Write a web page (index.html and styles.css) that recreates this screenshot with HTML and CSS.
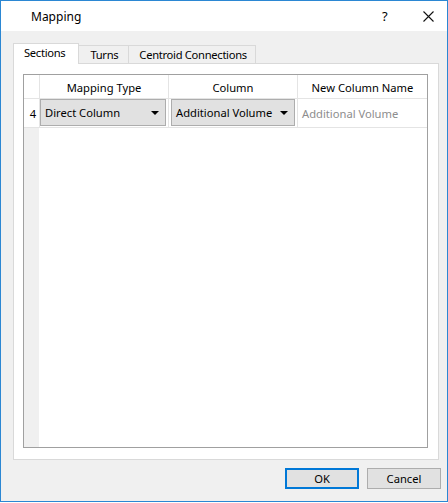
FILE: index.html
```html
<!DOCTYPE html>
<html lang="en">
<head>
    <meta charset="UTF-8">
    <title>Mapping</title>
    <link rel="stylesheet" href="styles.css">
</head>
<body>
    <div class="window">
        <div class="titlebar">
            <span class="title">Mapping</span>
            <span class="help">?</span>
            <span class="close">
                <svg width="11" height="11" viewBox="0 0 11 11"><path d="M0.5 0.5L10.5 10.5M10.5 0.5L0.5 10.5" stroke="#111" stroke-width="1.1"/></svg>
            </span>
        </div>

        <div class="content">
            <div class="tabs">
                <div class="tab active">Sections</div>
                <div class="tab">Turns</div>
                <div class="tab last">Centroid Connections</div>
            </div>
            <div class="panel">
                <div class="grid">
                    <div class="row head">
                        <div class="cell rowhead"></div>
                        <div class="cell">Mapping Type</div>
                        <div class="cell">Column</div>
                        <div class="cell">New Column Name</div>
                    </div>
                    <div class="row data">
                        <div class="cell rowhead">4</div>
                        <div class="cell">
                            <div class="combo">Direct Column<span class="arrow"></span></div>
                        </div>
                        <div class="cell">
                            <div class="combo">Additional Volume<span class="arrow"></span></div>
                        </div>
                        <div class="cell placeholder">Additional Volume</div>
                    </div>
                    <div class="filler">
                        <div class="filler-head"></div>
                    </div>
                </div>
            </div>
        </div>

        <div class="footer">
            <button class="btn default">OK</button>
            <button class="btn">Cancel</button>
        </div>
    </div>
</body>
</html>
```

FILE: styles.css
```css
body {
    margin: 0;
    padding: 0;
    background: #fff;
    font-family: "Noto Sans", "Open Sans", sans-serif;
    font-size: 11.2px;
    color: #000;
}

.window {
    width: 448px;
    height: 502px;
    box-sizing: border-box;
    border: 1px solid #2b87d3;
    background: #f0f0f0;
    display: flex;
    flex-direction: column;
}

/* title bar */
.titlebar {
    height: 30px;
    background: #fff;
    display: flex;
    align-items: center;
    padding-left: 30px;
}
.title {
    flex: 1;
    font-size: 12px;
}
.help {
    width: 41px;
    font-size: 13px;
}
.close {
    width: 24px;
    display: flex;
}

/* tab control */
.content {
    margin: 12px 8px 0 12px;
}
.tabs {
    display: flex;
    height: 20px;
    align-items: flex-end;
}
.tab {
    height: 18px;
    line-height: 17px;
    padding: 0 10px 0 11px;
    letter-spacing: -0.3px;
    border: 1px solid #d9d9d9;
    border-bottom: none;
    border-left: none;
    box-sizing: border-box;
    background: #f0f0f0;
}
.tab.last {
    padding: 0 8px 0 10px;
}
.tab.active {
    height: 21px;
    margin-bottom: -1px;
    position: relative;
    line-height: 18px;
    background: #fff;
    border-left: 1px solid #d9d9d9;
    padding: 0 13px 0 10px;
}
.panel {
    height: 397px;
    box-sizing: border-box;
    border: 1px solid #d9d9d9;
    background: #fff;
    padding: 10px 10px 11px 9px;
}

/* data grid */
.grid {
    height: 100%;
    box-sizing: border-box;
    border: 1px solid #a0a0a0;
    display: flex;
    flex-direction: column;
}
.row {
    display: grid;
    grid-template-columns: 15px 129px 129px 1fr;
    border-bottom: 1px solid #e4e4e4;
}
.row.head {
    height: 23px;
}
.row.data {
    height: 28px;
}
.cell {
    border-left: 1px solid #e4e4e4;
    display: flex;
    align-items: center;
}
.cell.rowhead {
    border-left: none;
    justify-content: center;
    padding-left: 2px;
}
.head .cell {
    justify-content: center;
    padding-top: 1px;
}
.data .cell {
    padding: 0 2px 0 0;
}
.data .cell.rowhead {
    padding: 0 0 0 3px;
}
.combo {
    flex: 1;
    height: 27px;
    box-sizing: border-box;
    border: 1px solid #adadad;
    background: #e1e1e1;
    display: flex;
    align-items: center;
    padding-left: 4px;
    margin-top: -1px;
}
.data .cell:nth-child(3) .combo {
    margin-left: 2px;
}
.arrow {
    margin-left: auto;
    margin-right: 6px;
    border-left: 4px solid transparent;
    border-right: 4px solid transparent;
    border-top: 4px solid #000;
}
.placeholder {
    color: #8d8d8d;
    padding-left: 4px !important;
}
.filler {
    flex: 1;
    display: flex;
}
.filler-head {
    width: 15px;
    background: #f0f0f0;
}

/* buttons */
.footer {
    display: flex;
    justify-content: flex-end;
    gap: 8px;
    padding: 8px 6px 0 0;
}
.btn {
    width: 74px;
    height: 21px;
    box-sizing: border-box;
    border: 1px solid #adadad;
    background: #e1e1e1;
    font-family: "Noto Sans", "Open Sans", sans-serif;
    font-size: 11.2px;
    padding: 0;
    color: #000;
}
.btn.default {
    border: 2px solid #0078d7;
}
```
